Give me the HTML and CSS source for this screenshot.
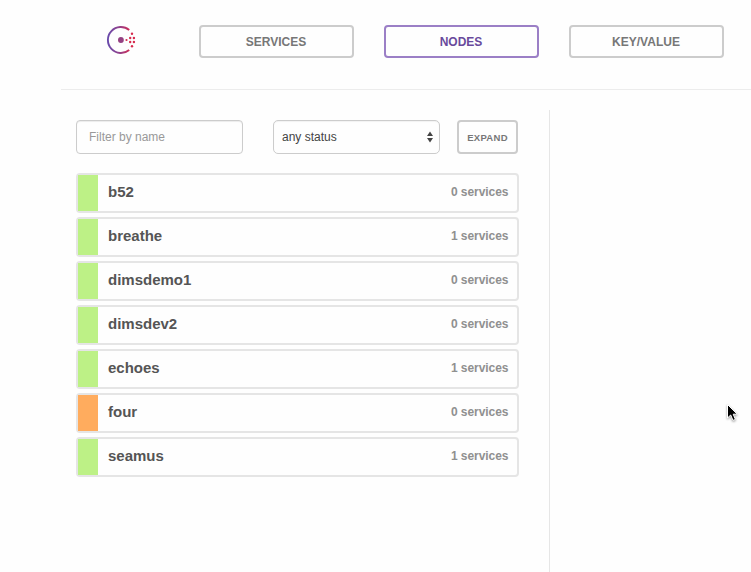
FILE: index.html
```html
<!DOCTYPE html>
<html lang="en">
<head>
<meta charset="utf-8">
<title>Consul</title>
<link rel="stylesheet" href="styles.css">
</head>
<body>
<header class="topbar">
  <a class="logo" aria-label="Consul">
    <svg width="30" height="30" viewBox="0 0 30 30">
      <defs>
        <linearGradient id="ring" gradientUnits="userSpaceOnUse" x1="2" y1="0" x2="25" y2="0">
          <stop offset="0" stop-color="#694aab"/>
          <stop offset=".5" stop-color="#93418a"/>
          <stop offset="1" stop-color="#d62a50"/>
        </linearGradient>
      </defs>
      <path d="M23.2 5A13 13 0 1 0 23.2 25" fill="none" stroke="url(#ring)" stroke-width="1.9"/>
      <circle cx="14.9" cy="15" r="2.9" fill="#954082"/>
      <g fill="#d62a4d">
        <circle cx="20.5" cy="15" r="1.1"/>
        <circle cx="24.2" cy="13" r="1.2"/>
        <circle cx="24.2" cy="17" r="1.2"/>
        <circle cx="27.9" cy="13" r="1.2"/>
        <circle cx="27.9" cy="17" r="1.2"/>
        <circle cx="26" cy="8.7" r="1.2"/>
        <circle cx="26" cy="21.3" r="1.2"/>
      </g>
    </svg>
  </a>
  <nav class="nav">
    <a class="btn">SERVICES</a>
    <a class="btn active">NODES</a>
    <a class="btn">KEY/VALUE</a>
  </nav>
</header>
<main class="content">
  <section class="list-pane">
    <form class="filters">
      <input class="control filter" type="text" placeholder="Filter by name">
      <div class="control status">
        <span>any status</span>
        <svg width="6" height="12" viewBox="0 0 6 12"><path d="M0 5 3 .5 6 5ZM0 7 3 11.5 6 7Z" fill="#444"/></svg>
      </div>
      <button class="btn expand" type="button">EXPAND</button>
    </form>
    <div class="nodes">
      <a class="node"><i class="health"></i><b class="name">b52</b><span class="count">0 services</span></a>
      <a class="node"><i class="health"></i><b class="name">breathe</b><span class="count">1 services</span></a>
      <a class="node"><i class="health"></i><b class="name">dimsdemo1</b><span class="count">0 services</span></a>
      <a class="node"><i class="health"></i><b class="name">dimsdev2</b><span class="count">0 services</span></a>
      <a class="node"><i class="health"></i><b class="name">echoes</b><span class="count">1 services</span></a>
      <a class="node"><i class="health warning"></i><b class="name">four</b><span class="count">0 services</span></a>
      <a class="node"><i class="health"></i><b class="name">seamus</b><span class="count">1 services</span></a>
    </div>
  </section>
  <section class="detail-pane"></section>
</main>
<svg class="cursor" width="14" height="21" viewBox="0 0 14 21">
  <path d="M1.5 1.5V15L4.7 12 7 17.4 9.4 16.4 7.2 11.2H11.3Z" fill="#000" stroke="#fff" stroke-width="1"/>
</svg>
</body>
</html>
```
FILE: styles.css
```css
* { box-sizing: border-box; }

body {
  margin: 0;
  height: 572px;
  padding-left: 61px;
  overflow: hidden;
  display: flex;
  flex-direction: column;
  background: #fefefe;
  color: #555;
  font-family: "Liberation Sans", Arial, sans-serif;
}

.topbar {
  height: 90px;
  flex: none;
  display: flex;
  align-items: flex-start;
  padding-top: 25px;
  border-bottom: 1px solid #ececec;
}

.logo {
  width: 138px;
  padding-left: 45px;
}

.logo svg { display: block; }

.nav {
  display: flex;
  gap: 30px;
}

.btn {
  width: 155px;
  height: 33px;
  flex: none;
  display: flex;
  align-items: center;
  justify-content: center;
  padding-right: 1px;
  border: 2px solid #ccc;
  border-radius: 4px;
  background: #fefefe;
  color: #777;
  font: bold 12px "Liberation Sans", Arial, sans-serif;
}

.btn.active {
  border-color: #9b7fc6;
  color: #694a9c;
}

.content {
  flex: 1;
  display: flex;
  padding-top: 20px;
}

.list-pane {
  width: 489px;
  padding: 10px 31px 0 15px;
  border-right: 1px solid #e6e6e6;
}

.filters { display: flex; }

.control {
  width: 167px;
  height: 34px;
  border: 1px solid #ccc;
  border-radius: 4px;
  background: #fefefe;
  color: #555;
  font: 12px "Liberation Sans", Arial, sans-serif;
}

.filter {
  margin-right: 30px;
  padding: 0 12px;
  box-shadow: inset 0 1px 1px rgba(0, 0, 0, .075);
}

.filter::placeholder { color: #999; }

.status {
  display: flex;
  align-items: center;
  justify-content: space-between;
  margin-right: 17px;
  padding: 0 6px 0 8px;
  border-radius: 5px;
  box-shadow: inset 0 1px 1px rgba(0, 0, 0, .05);
  color: #444;
}

.btn.expand {
  width: 61px;
  height: 34px;
  padding: 1px 0 0;
  font-size: 9.5px;
  letter-spacing: .3px;
}

.nodes {
  width: 443px;
  margin-top: 19px;
  display: flex;
  flex-direction: column;
  gap: 4px;
}

.node {
  height: 40px;
  display: flex;
  border: 2px solid #e5e5e5;
  border-radius: 4px;
  line-height: 34px;
}

.health {
  width: 20px;
  background: #bdf186;
}

.health.warning { background: #ffac5e; }

.name {
  flex: 1;
  padding-left: 10px;
  font-size: 15px;
}

.count {
  padding-right: 8.5px;
  color: #909090;
  font-size: 12px;
  font-weight: bold;
  letter-spacing: -.05px;
}

.cursor {
  position: absolute;
  left: 726px;
  top: 403px;
  filter: drop-shadow(0 1px 1px rgba(0, 0, 0, .4));
}
```
